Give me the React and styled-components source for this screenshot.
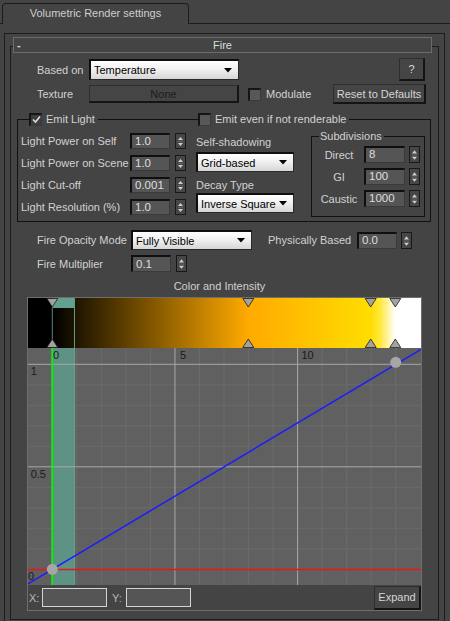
import React from "react";
import styled, { createGlobalStyle } from "styled-components";

const GlobalStyle = createGlobalStyle`
  * { box-sizing: border-box; }
  html, body {
    margin: 0;
    padding: 0;
    background: #444444;
  }
  body {
    width: 450px;
    height: 621px;
    overflow: hidden;
    font-family: "Liberation Sans", Arial, sans-serif;
    font-size: 11px;
    color: #d2d2d2;
  }
`;

const Window = styled.div`
  width: 450px;
  height: 621px;
  background: #444444;
  display: flex;
  flex-direction: column;
  overflow: hidden;
`;

const TabStrip = styled.div`
  height: 24px;
  flex: none;
  display: flex;
  align-items: flex-end;
  padding-left: 2px;
  border-bottom: 1px solid #1c1c1c;
`;

const Tab = styled.div`
  width: 187px;
  height: 21px;
  margin-bottom: -1px;
  display: flex;
  align-items: center;
  justify-content: center;
  padding-bottom: 2px;
  background: #444444;
  border: 1px solid #1c1c1c;
  border-bottom: none;
  border-radius: 4px 4px 0 0;
  color: #cfcfcf;
`;

const Panel = styled.div`
  flex: 1;
  width: 441px;
  margin: 9px 0 0 4px;
  padding-left: 5px;
  border: 1px solid #1c1c1c;
  border-bottom: none;
`;

const Rollout = styled.div`
  width: 429px;
  height: 574px;
  margin-top: 12px;
  display: flex;
  flex-direction: column;
  border: 1px solid #1c1c1c;
`;

const RolloutTitle = styled.div`
  width: 419px;
  height: 16px;
  margin: -10px 0 0 2px;
  flex: none;
  display: grid;
  grid-template-columns: 20px 1fr 20px;
  align-items: center;
  background: #444444;
  border: 1px solid #6c6c6c;
  color: #dcdcdc;
`;

const Minus = styled.span`
  padding-left: 3px;
  font-weight: bold;
`;

const TitleText = styled.span`
  text-align: center;
`;

const Row = styled.div`
  display: flex;
  align-items: center;
  flex: none;
  height: ${(p) => p.$h}px;
  margin-top: ${(p) => p.$mt || 0}px;
`;

const Label = styled.span`
  flex: none;
  width: ${(p) => (p.$w ? `${p.$w}px` : "auto")};
  margin-left: ${(p) => p.$ml || 0}px;
  text-align: ${(p) => p.$align || "left"};
  white-space: nowrap;
  color: #d2d2d2;
`;

const SelectBox = styled.div`
  flex: none;
  width: ${(p) => p.$w}px;
  height: ${(p) => p.$h || 20}px;
  display: flex;
  align-items: center;
  justify-content: space-between;
  padding: 0 6px 0 3px;
  background: linear-gradient(#ffffff, #f1f1f1 45%, #d6d6d6);
  border-top: 2px solid #0e0e0e;
  border-left: 2px solid #0e0e0e;
  border-right: 1px solid #2a2a2a;
  border-bottom: 1px solid #2a2a2a;
  color: #000000;
  white-space: nowrap;
`;

const Button = styled.div`
  flex: none;
  width: ${(p) => p.$w}px;
  height: ${(p) => p.$h}px;
  margin-left: ${(p) => p.$ml || "0"};
  margin-right: ${(p) => p.$mr || 0}px;
  display: flex;
  align-items: center;
  justify-content: center;
  background: #454545;
  border-top: 1px solid #2e2e2e;
  border-left: 1px solid #2e2e2e;
  border-right: 2px solid #141414;
  border-bottom: 2px solid #141414;
  color: ${(p) => (p.$dim ? "#1c1c1c" : "#d6d6d6")};
  white-space: nowrap;
`;

const Check = styled.span`
  flex: none;
  width: 13px;
  height: 13px;
  margin-left: ${(p) => p.$ml || 0}px;
  display: flex;
  align-items: center;
  justify-content: center;
  background: ${(p) => (p.$on ? "#3d3d3d" : "#585858")};
  border-top: 2px solid #151515;
  border-left: 2px solid #151515;
  border-right: 1px solid #3a3a3a;
  border-bottom: 1px solid #3a3a3a;
`;

const Rule = styled.span`
  height: 1px;
  background: #111111;
  flex: ${(p) => (p.$w ? "none" : "1")};
  width: ${(p) => (p.$w ? `${p.$w}px` : "auto")};
  margin-left: ${(p) => p.$ml || 0}px;
`;

const Group = styled.div`
  flex: none;
  width: ${(p) => p.$w}px;
  margin-top: ${(p) => p.$mt || 0}px;
  margin-left: ${(p) => p.$ml || 0}px;
  display: flex;
  flex-direction: column;
`;

const GroupHeader = styled.div`
  height: 14px;
  display: flex;
  align-items: center;
  position: relative;
  z-index: 1;
`;

const LegendPart = styled.div`
  display: flex;
  align-items: center;
  width: ${(p) => (p.$w ? `${p.$w}px` : "auto")};
  flex: ${(p) => (p.$w ? "none" : "1")};
`;

const GroupBody = styled.div`
  height: ${(p) => p.$h}px;
  margin-top: -7px;
  display: flex;
  align-items: flex-start;
  border: 1px solid #111111;
  border-top: none;
`;

const LeftCol = styled.div`
  display: flex;
  flex-direction: column;
  gap: 6px;
  padding: 14px 0 0 3px;
`;

const RightCol = styled.div`
  width: 98px;
  margin-left: 10px;
  padding-top: 16px;
  display: flex;
  flex-direction: column;
`;

const ColLabel = styled.div`
  height: 14px;
  line-height: 14px;
  margin-top: ${(p) => p.$mt || 0}px;
  margin-bottom: ${(p) => p.$mb}px;
  white-space: nowrap;
`;

const SubRows = styled.div`
  display: flex;
  flex-direction: column;
  gap: 5px;
  padding-top: 10px;
`;

const SpinWrap = styled.div`
  flex: none;
  display: flex;
  align-items: center;
  gap: ${(p) => p.$gap}px;
  margin-left: ${(p) => p.$ml || 0}px;
`;

const Field = styled.div`
  width: ${(p) => p.$w}px;
  height: ${(p) => p.$h}px;
  display: flex;
  align-items: ${(p) => (p.$top ? "flex-start" : "center")};
  padding-left: 3px;
  line-height: 13px;
  background: #555555;
  border-top: 2px solid #0f0f0f;
  border-left: 2px solid #0f0f0f;
  border-right: 1px solid #3a3a3a;
  border-bottom: 1px solid #3a3a3a;
  color: #dedede;
  font-size: 11.5px;
`;

const Arrows = styled.div`
  width: 11px;
  height: ${(p) => p.$h}px;
  display: flex;
  background: #464646;
  border: 1px solid #181818;
`;

const Caption = styled.div`
  flex: none;
  height: 13px;
  margin-top: 8px;
  padding-right: 10px;
  line-height: 13px;
  text-align: center;
  color: #d0d0d0;
`;

const GraphBox = styled.div`
  flex: none;
  width: 395px;
  height: 314px;
  margin: 4px 0 0 16px;
  display: flex;
  flex-direction: column;
  border: 1px solid #6e6e6e;
  background: #444444;
`;

const Chart = styled.svg`
  display: block;
  flex: none;
`;

const Strip = styled.div`
  flex: 1;
  display: flex;
  align-items: center;
  padding-left: 1px;
`;

const StripLabel = styled.span`
  width: ${(p) => p.$w}px;
  margin-left: ${(p) => p.$ml || 0}px;
  color: #b8b8c0;
`;

const CoordInput = styled.div`
  width: 65px;
  height: 19px;
  background: #555555;
  border: 1px solid #d4d4d4;
`;

const ArrowsIcon = () => (
  <svg width="9" height="100%" viewBox="0 0 9 14" preserveAspectRatio="none">
    <polygon points="2,6 7,6 4.5,3" fill="#cfcfcf" />
    <line x1="2" y1="7.5" x2="7" y2="7.5" stroke="#6a6a6a" strokeWidth="0.8" />
    <polygon points="2,9 7,9 4.5,12" fill="#cfcfcf" />
  </svg>
);

const DropArrow = () => (
  <svg width="8" height="5" viewBox="0 0 8 5">
    <polygon points="0,0 8,0 4,4.5" fill="#000" />
  </svg>
);

const Tick = () => (
  <svg width="9" height="9" viewBox="0 0 9 9">
    <polyline points="1,4.5 3.5,7 8,1.5" fill="none" stroke="#dcdcdc" strokeWidth="1.6" />
  </svg>
);

const Spinner = ({ value, w = 40, h = 16, gap = 5, ml, top }) => (
  <SpinWrap $gap={gap} $ml={ml}>
    <Field $w={w} $h={h} $top={top}>
      {value}
    </Field>
    <Arrows $h={h}>
      <ArrowsIcon />
    </Arrows>
  </SpinWrap>
);

const Select = ({ w, h, children }) => (
  <SelectBox $w={w} $h={h}>
    <span>{children}</span>
    <DropArrow />
  </SelectBox>
);

const lightRows = [
  ["Light Power on Self", "1.0"],
  ["Light Power on Scene", "1.0"],
  ["Light Cut-off", "0.001"],
  ["Light Resolution (%)", "1.0"],
];

const subdivRows = [
  ["Direct", "8"],
  ["GI", "100"],
  ["Caustic", "1000"],
];

// chart geometry, local to the graph box interior
const CW = 393;
const CH = 287;
const BAR = 50;
const X0 = 24.3;
const UX = 24.53;
const Y0 = 271.3;
const UY = 205;
const px = (v) => X0 + v * UX;
const py = (v) => Y0 - v * UY;
const markers = [px(0), 220.3, 342.7, 367.3];

const ColorChart = () => {
  const minorX = [];
  for (let k = 1; k <= 15; k++) if (k % 5 !== 0) minorX.push(px(k));
  const minorY = [];
  for (let k = 1; k <= 10; k++) if (k % 5 !== 0) minorY.push(py(k / 10));

  return (
    <Chart width={CW} height={CH} viewBox={`0 0 ${CW} ${CH}`}>
      <defs>
        <linearGradient id="fire" x1="0" x2={CW} y1="0" y2="0" gradientUnits="userSpaceOnUse">
          <stop offset={X0 / CW} stopColor="#000000" />
          <stop offset={220.3 / CW} stopColor="#ffaa00" />
          <stop offset={342.7 / CW} stopColor="#ffdd00" />
          <stop offset={352 / CW} stopColor="#ffe83a" />
          <stop offset={367.3 / CW} stopColor="#ffffff" />
        </linearGradient>
      </defs>

      <rect x="0" y="0" width={CW} height={BAR} fill="url(#fire)" />
      <rect x={X0} y="0" width={46 - X0} height="10" fill="#62a08f" />
      <line x1="46.5" y1="0" x2="46.5" y2={BAR} stroke="#5a9a8a" />
      <line x1={X0} y1="10" x2={X0} y2="42" stroke="#4f8a7c" />
      {markers.map((m) => (
        <g key={m}>
          <polygon points={`${m - 5.5},0.5 ${m + 5.5},0.5 ${m},9`} fill="#a2a2a2" stroke="#1a1a1a" strokeWidth="0.8" />
          <polygon points={`${m - 5.5},${BAR - 0.5} ${m + 5.5},${BAR - 0.5} ${m},${BAR - 9}`} fill="#a2a2a2" stroke="#1a1a1a" strokeWidth="0.8" />
        </g>
      ))}

      <rect x="0" y={BAR} width={CW} height={CH - BAR} fill="#606060" />
      {minorX.map((x) => (
        <line key={`mx${x}`} x1={x} y1={BAR} x2={x} y2={CH} stroke="#6b6b6b" />
      ))}
      {minorY.map((y) => (
        <line key={`my${y}`} x1="0" y1={y} x2={CW} y2={y} stroke="#6b6b6b" />
      ))}
      <rect x={X0 + 1} y={BAR} width={46 - X0 - 1} height={CH - BAR} fill="#5e9285" />
      <line x1="46.5" y1={BAR} x2="46.5" y2={CH} stroke="#6a9e90" />
      {[px(5), px(10)].map((x) => (
        <line key={`Mx${x}`} x1={x} y1={BAR} x2={x} y2={CH} stroke="#a8a8a8" />
      ))}
      {[py(1), py(0.5)].map((y) => (
        <line key={`My${y}`} x1="0" y1={y} x2={CW} y2={y} stroke="#a8a8a8" />
      ))}
      <line x1="0" y1="271.5" x2={CW} y2="271.5" stroke="#ee1414" strokeWidth="1.6" />
      <line x1={X0} y1={BAR} x2={X0} y2={CH} stroke="#12ee12" strokeWidth="2" />
      <line x1="0" y1={Y0 + X0 * 0.5965} x2={CW} y2={Y0 - (CW - X0) * 0.5965} stroke="#1c1cff" strokeWidth="1.5" />
      <circle cx={X0} cy={Y0} r="5.5" fill="#a6a6a6" />
      <circle cx={px(14)} cy={py(1) - 2} r="5.5" fill="#a6a6a6" />

      <g fill="#1a1a1a" fontSize="11" fontFamily="Liberation Sans, Arial, sans-serif">
        <text x="25" y="61">0</text>
        <text x="152" y="61">5</text>
        <text x="273.5" y="61">10</text>
        <text x="2.7" y="77">1</text>
        <text x="2.7" y="180">0.5</text>
        <text x="0" y="282">0</text>
      </g>
    </Chart>
  );
};

export default function App() {
  return (
    <Window>
      <GlobalStyle />
      <TabStrip>
        <Tab>Volumetric Render settings</Tab>
      </TabStrip>
      <Panel>
        <Rollout>
          <RolloutTitle>
            <Minus>-</Minus>
            <TitleText>Fire</TitleText>
            <span />
          </RolloutTitle>

          <Row $h={23} $mt={5}>
            <Label $ml={26} $w={52}>
              Based on
            </Label>
            <Select w={150} h={21}>
              Temperature
            </Select>
            <Button $w={26} $h={23} $ml="auto" $mr={13}>
              ?
            </Button>
          </Row>

          <Row $h={20} $mt={3}>
            <Label $ml={26} $w={52}>
              Texture
            </Label>
            <Button $w={150} $h={18} $dim>
              None
            </Button>
            <Check $ml={9} />
            <Label $ml={5}>Modulate</Label>
            <Button $w={93} $h={20} $ml="auto" $mr={12}>
              Reset to Defaults
            </Button>
          </Row>

          <Group $w={414} $mt={8} $ml={6}>
            <GroupHeader>
              <LegendPart $w={181}>
                <Rule $w={12} />
                <Check $on>
                  <Tick />
                </Check>
                <Label $ml={4}>Emit Light</Label>
                <Rule $ml={3} />
              </LegendPart>
              <LegendPart>
                <Check />
                <Label $ml={4}>Emit even if not renderable</Label>
                <Rule $ml={3} />
              </LegendPart>
            </GroupHeader>
            <GroupBody $h={103}>
              <LeftCol>
                {lightRows.map(([name, value]) => (
                  <Row key={name} $h={16}>
                    <Label $w={109}>{name}</Label>
                    <Spinner value={value} />
                  </Row>
                ))}
              </LeftCol>
              <RightCol>
                <ColLabel $mb={3}>Self-shadowing</ColLabel>
                <Select w={98} h={20}>
                  Grid-based
                </Select>
                <ColLabel $mt={6} $mb={1}>
                  Decay Type
                </ColLabel>
                <Select w={98} h={20}>
                  Inverse Square
                </Select>
              </RightCol>
              <Group $w={114} $mt={10} $ml={17}>
                <GroupHeader>
                  <Rule $w={8} />
                  <Label $ml={1}>Subdivisions</Label>
                  <Rule $ml={2} />
                </GroupHeader>
                <GroupBody $h={81}>
                  <SubRows>
                    {subdivRows.map(([name, value]) => (
                      <Row key={name} $h={17}>
                        <Label $ml={8} $w={38} $align="center">
                          {name}
                        </Label>
                        <Spinner value={value} w={41} h={17} gap={4} ml={6} top />
                      </Row>
                    ))}
                  </SubRows>
                </GroupBody>
              </Group>
            </GroupBody>
          </Group>

          <Row $h={20} $mt={8}>
            <Label $ml={26} $w={94}>
              Fire Opacity Mode
            </Label>
            <Select w={121} h={20}>
              Fully Visible
            </Select>
            <Label $ml={16} $w={89}>
              Physically Based
            </Label>
            <Spinner value="0.0" h={17} gap={4} />
          </Row>

          <Row $h={17} $mt={5}>
            <Label $ml={26} $w={94}>
              Fire Multiplier
            </Label>
            <Spinner value="0.1" h={17} />
          </Row>

          <Caption>Color and Intensity</Caption>

          <GraphBox>
            <ColorChart />
            <Strip>
              <StripLabel $w={13}>X:</StripLabel>
              <CoordInput />
              <StripLabel $w={14} $ml={5}>
                Y:
              </StripLabel>
              <CoordInput />
              <Button $w={47} $h={24} $ml="auto">
                Expand
              </Button>
            </Strip>
          </GraphBox>
        </Rollout>
      </Panel>
    </Window>
  );
}
